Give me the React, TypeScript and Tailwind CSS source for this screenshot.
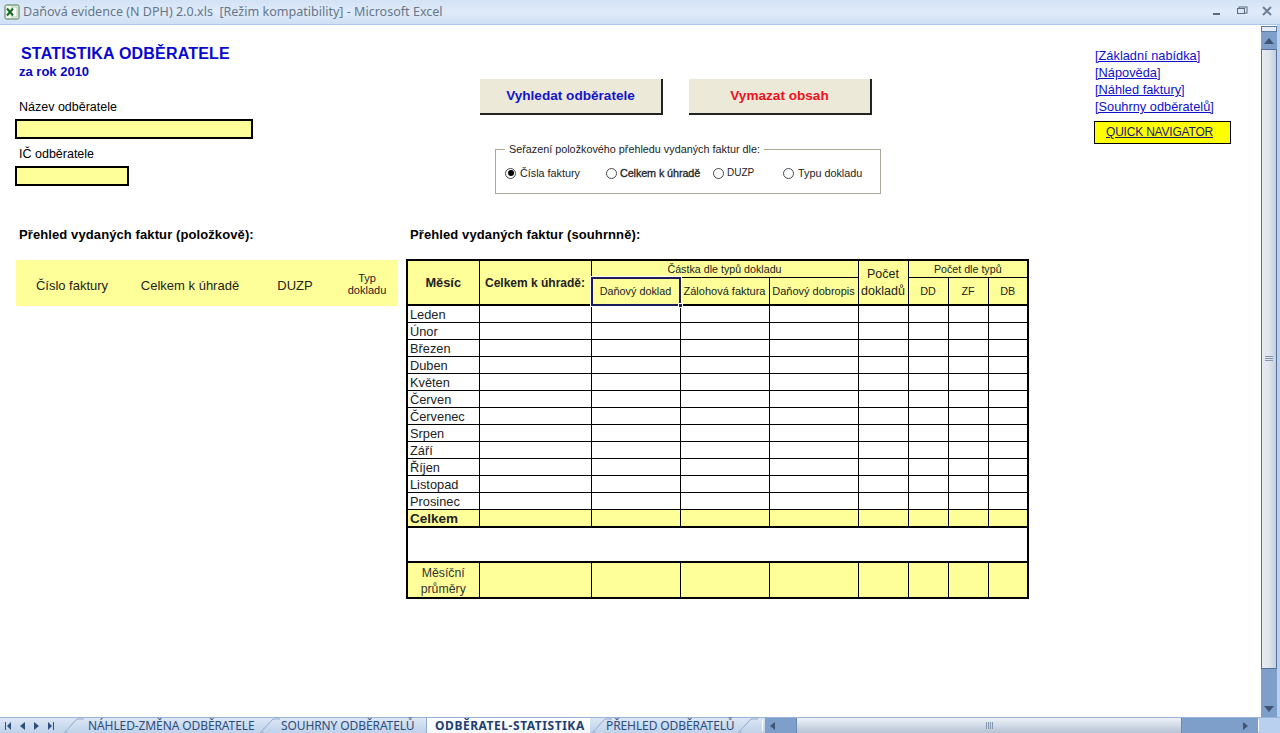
import React from "react";

const months = ["Leden","Únor","Březen","Duben","Květen","Červen","Červenec","Srpen","Září","Říjen","Listopad","Prosinec"];
const blanks = [0,1,2,3,4,5,6,7];
const cell = "border border-black p-0";
const yellowCell = "border border-black p-0 bg-[#ffff99]";

function ExcelIcon() {
  return (
    <svg width="16" height="16" viewBox="0 0 16 16" className="shrink-0">
      <rect x="1" y="1" width="14" height="14" rx="1.5" fill="#eef5ea" stroke="#4d7a4d" />
      <rect x="8" y="3" width="5" height="10" fill="#ffffff" stroke="#9bb89b" strokeWidth="0.7" />
      <path d="M3 4.5 L9 11.5 M9 4.5 L3 11.5" stroke="#1d6b2a" strokeWidth="2" />
    </svg>
  );
}

function Radio({ on }: { on?: boolean }) {
  return (
    <span className="relative inline-block w-[11px] h-[11px] rounded-full border border-[#4a4a4a] bg-white shrink-0">
      {on && <span className="absolute left-[1.5px] top-[1.5px] w-[6px] h-[6px] rounded-full bg-black" />}
    </span>
  );
}

function Slant() {
  return (
    <svg width="22" height="16" viewBox="0 0 22 16" className="shrink-0">
      <path d="M1 16 L15 1 L22 1" fill="none" stroke="#8ea9cf" />
      <path d="M2 16 L5 13 L7 16 Z" fill="#a8bcd8" />
    </svg>
  );
}

export default function App() {
  return (
    <div className="w-[1280px] h-[733px] overflow-hidden bg-white flex flex-col font-['Liberation_Sans',Arial,sans-serif] text-black">
      {/* Title bar */}
      <div className="h-[25px] shrink-0 flex items-center pl-[4px] bg-gradient-to-b from-[#d3e2f5] via-[#e0ebfa] to-[#cfe0f5] border-b border-[#a9c8ec]">
        <ExcelIcon />
        <span className="ml-[3px] flex-1 whitespace-pre text-[12.56px] text-[#64768a] font-['Noto_Sans',sans-serif]">
          Daňová evidence (N DPH) 2.0.xls  [Režim kompatibility] - Microsoft Excel
        </span>
        <svg width="72" height="14" viewBox="0 0 72 14" className="mr-[7px]">
          <rect x="12" y="8" width="7" height="2" fill="#5a6b80" />
          <rect x="38" y="2" width="8" height="6" fill="none" stroke="#5a6b80" />
          <rect x="36.5" y="3.5" width="7" height="5" fill="#dbe7f7" stroke="#5a6b80" />
          <path d="M62 2 L70 10 M70 2 L62 10" stroke="#6d7f95" strokeWidth="2" />
        </svg>
      </div>

      {/* Sheet + vertical scrollbar */}
      <div className="flex-1 min-h-0 flex">
        <div className="w-[1261px] flex items-start">
          {/* Left column */}
          <div className="w-[406px] shrink-0 pl-[15px]">
            <div className="mt-[20px] ml-[6px] text-[16px] leading-[18px] font-bold tracking-[0.2px] text-[#0808d0] whitespace-nowrap">STATISTIKA ODBĚRATELE</div>
            <div className="mt-[1px] ml-[4px] text-[13px] leading-[16px] font-bold text-[#0808c0]">za rok 2010</div>
            <div className="mt-[19px] ml-[4px] text-[12.5px] leading-[16px]">Název odběratele</div>
            <div className="mt-[4px] w-[238px] h-[20px] border-2 border-black bg-[#ffff99]" />
            <div className="mt-[7px] ml-[4px] text-[12.5px] leading-[16px]">IČ odběratele</div>
            <div className="mt-[4px] w-[114px] h-[20px] border-2 border-black bg-[#ffff99]" />
            <div className="mt-[41px] ml-[4px] text-[13px] leading-[16px] font-bold tracking-[0.1px] whitespace-nowrap">Přehled vydaných faktur (položkově):</div>
            <div className="mt-[17px] ml-px w-[382px] h-[46px] bg-[#ffff99] flex items-center text-[13px] text-[#222]">
              <span className="w-[112px] pt-[6px] text-center">Číslo faktury</span>
              <span className="w-[124px] pt-[6px] text-center">Celkem k úhradě</span>
              <span className="w-[86px] pt-[6px] text-center">DUZP</span>
              <span className="w-[58px] pt-[2px] text-center text-[11px] leading-[12px]">Typ<br />dokladu</span>
            </div>
          </div>

          {/* Middle column */}
          <div className="w-[623px] shrink-0">
            <div className="mt-[54px] ml-[74px] flex gap-[26px]">
              <div className="w-[183px] h-[36px] bg-[#ece9d8] border-r-2 border-b-2 border-[#222] flex items-center justify-center text-[13.6px] font-bold text-[#1414c8]">Vyhledat odběratele</div>
              <div className="w-[183px] h-[36px] bg-[#ece9d8] border-r-2 border-b-2 border-[#222] flex items-center justify-center text-[13.6px] font-bold text-[#ee1122]">Vymazat obsah</div>
            </div>
            <div className="relative mt-[34px] ml-[89px] w-[386px] h-[45px] border border-[#aca899] flex items-start pt-[16px] text-[10.8px] leading-[14px] text-[#222]">
              <span className="absolute -top-[8px] left-[9px] px-[4px] bg-white whitespace-nowrap">Seřazení položkového přehledu vydaných faktur dle:</span>
              <div className="w-[110px] pl-[9px] flex items-center gap-[4px]"><Radio on />Čísla faktury</div>
              <div className="w-[107px] flex items-center gap-[3px] [-webkit-text-stroke:0.3px_#222] whitespace-nowrap tracking-[-0.1px]"><Radio />Celkem k úhradě</div>
              <div className="w-[70px] flex items-center gap-[3px] text-[10px]"><Radio />DUZP</div>
              <div className="flex items-center gap-[4px]"><Radio />Typu dokladu</div>
            </div>
            <div className="mt-[33px] ml-[4px] text-[13px] leading-[16px] font-bold tracking-[0.1px] whitespace-nowrap">Přehled vydaných faktur (souhrnně):</div>
            <table className="mt-[16px] table-fixed border-collapse border-2 border-black w-[622px] text-[12.8px] leading-[14px] text-[#222]">
              <colgroup>
                <col className="w-[72px]" /><col className="w-[112px]" /><col className="w-[89px]" /><col className="w-[89px]" /><col className="w-[89px]" /><col className="w-[50px]" /><col className="w-[40px]" /><col className="w-[40px]" /><col className="w-[40px]" />
              </colgroup>
              <thead>
                <tr className="h-[17px]">
                  <th rowSpan={2} className={yellowCell + " font-bold"}>Měsíc</th>
                  <th rowSpan={2} className={yellowCell + " font-bold text-[12px]"}>Celkem k úhradě:</th>
                  <th colSpan={3} className={yellowCell + " font-normal text-[10.7px]"}>Částka dle typů dokladu</th>
                  <th rowSpan={2} className={yellowCell + " font-normal text-[12.5px] leading-[17px]"}>Počet<br />dokladů</th>
                  <th colSpan={3} className={yellowCell + " font-normal text-[10.7px]"}>Počet dle typů</th>
                </tr>
                <tr className="h-[28px] border-b-2 border-black text-[10.8px]">
                  <th className={yellowCell + " font-normal relative"}>
                    Daňový doklad
                    <span className="absolute -left-px -top-px -right-px -bottom-[2px] border-2 border-[#1c1c5c] outline outline-1 outline-white" />
                    <span className="absolute -right-[3px] -bottom-[4px] w-[5px] h-[5px] bg-[#1c1c5c] border border-white" />
                  </th>
                  <th className={yellowCell + " font-normal whitespace-nowrap text-[11px]"}>Zálohová faktura</th>
                  <th className={yellowCell + " font-normal whitespace-nowrap text-[11px]"}>Daňový dobropis</th>
                  <th className={yellowCell + " font-normal"}>DD</th>
                  <th className={yellowCell + " font-normal"}>ZF</th>
                  <th className={yellowCell + " font-normal"}>DB</th>
                </tr>
              </thead>
              <tbody>
                {months.map((m) => (
                  <tr key={m} className="h-[17px]">
                    <td className={cell + " pl-[2px] pt-[2px]"}>{m}</td>
                    {blanks.map((b) => <td key={b} className={cell} />)}
                  </tr>
                ))}
                <tr className="h-[17px] border-b-2 border-black">
                  <td className={yellowCell + " pl-[2px] pt-[2px] font-bold text-[13.5px]"}>Celkem</td>
                  {blanks.map((b) => <td key={b} className={yellowCell} />)}
                </tr>
                <tr className="h-[35px] border-b-2 border-black">
                  <td colSpan={9} className="p-0" />
                </tr>
                <tr className="h-[36px]">
                  <td className={yellowCell + " pt-px text-center text-[12.3px] leading-[16px] text-[#333]"}>Měsíční<br />průměry</td>
                  {blanks.map((b) => <td key={b} className={yellowCell} />)}
                </tr>
              </tbody>
            </table>
          </div>

          {/* Right column */}
          <div className="ml-[65px] w-[140px] shrink-0 pt-[22px]">
            <div className="ml-px text-[12.8px] leading-[17px] text-[#1010cc] underline flex flex-col items-start">
              <span>[Základní nabídka]</span>
              <span>[Nápověda]</span>
              <span>[Náhled faktury]</span>
              <span>[Souhrny odběratelů]</span>
            </div>
            <div className="mt-[6px] w-[137px] h-[23px] border border-black bg-[#ffff00] flex items-center pl-[11px] pb-[1px] text-[12px] text-[#1a1a70] underline tracking-[-0.2px]">QUICK NAVIGATOR</div>
          </div>
        </div>

        {/* Vertical scrollbar */}
        <div className="w-[16px] mt-[1px] flex flex-col items-stretch bg-[#7f9fcb]">
          <div className="h-[6px] bg-[#e3ecf7] border border-[#5d7aa3]" />
          <div className="h-[17px] flex items-center justify-center">
            <svg width="10" height="6" viewBox="0 0 10 6"><path d="M5 0 L10 6 L0 6 Z" fill="#3f5573" /></svg>
          </div>
          <div className="h-[620px] bg-gradient-to-r from-[#e6ebf2] via-[#dfe5ee] to-[#c3cedd] border border-[#56709a] flex items-center justify-center">
            <div className="w-[8px] h-[6px] bg-[repeating-linear-gradient(to_bottom,#8496ae_0,#8496ae_1px,transparent_1px,transparent_2px)]" />
          </div>
          <div className="flex-1 flex items-end justify-center pb-[5px]">
            <svg width="10" height="6" viewBox="0 0 10 6"><path d="M0 0 L10 0 L5 6 Z" fill="#3f5573" /></svg>
          </div>
        </div>
        <div className="w-[3px] bg-[#b9d0ee]" />
      </div>

      {/* Sheet tabs + horizontal scrollbar */}
      <div className="h-[16px] shrink-0 flex items-stretch bg-gradient-to-b from-[#dce7f5] to-[#bfd2ea] border-t border-[#98b3d8] text-[12px] leading-[15px] text-[#2c4c7c] font-['Noto_Sans',sans-serif] whitespace-nowrap">
        <div className="w-[62px] shrink-0 flex items-center gap-[9px] pl-[5px]">
          <svg width="6" height="8" viewBox="0 0 6 8"><path d="M0 0 H1 V8 H0 Z M6 0 V8 L2 4 Z" fill="#2f4f7f" /></svg>
          <svg width="5" height="8" viewBox="0 0 5 8"><path d="M5 0 V8 L0 4 Z" fill="#2f4f7f" /></svg>
          <svg width="5" height="8" viewBox="0 0 5 8"><path d="M0 0 V8 L5 4 Z" fill="#2f4f7f" /></svg>
          <svg width="6" height="8" viewBox="0 0 6 8"><path d="M0 0 V8 L4 4 Z M5 0 H6 V8 H5 Z" fill="#2f4f7f" /></svg>
        </div>
        <Slant />
        <span className="ml-[4px] w-[170px] shrink-0 tracking-[-0.1px]">NÁHLED-ZMĚNA ODBĚRATELE</span>
        <Slant />
        <span className="ml-[1px] w-[131px] shrink-0 tracking-[-0.1px]">SOUHRNY ODBĚRATELŮ</span>
        <div className="ml-[14px] w-[164px] shrink-0 bg-gradient-to-b from-white to-[#f2f6fb] border-l border-[#8ea9cf] pl-[8px] font-bold tracking-[0.55px] text-[#1f3f70]">ODBĚRATEL-STATISTIKA</div>
        <Slant />
        <span className="-ml-[6px] w-[134px] shrink-0 tracking-[-0.1px]">PŘEHLED ODBĚRATELŮ</span>
        <div className="w-[24px] shrink-0 -ml-[4px]"><Slant /></div>
        <div className="ml-[2px] w-[1px] my-[2px] bg-white" />
        <div className="ml-[2px] flex-1 flex items-stretch bg-[#7f9fcb]">
          <div className="w-[31px] flex items-center justify-start pl-[5px]">
            <svg width="5" height="8" viewBox="0 0 5 8"><path d="M5 0 V8 L0 4 Z" fill="#3f5573" /></svg>
          </div>
          <div className="w-[386px] bg-gradient-to-b from-[#eef2f7] to-[#b5c3d6] border-x border-[#6d86ab] flex items-center justify-center">
            <div className="w-[7px] h-[7px] bg-[repeating-linear-gradient(to_right,#8496ae_0,#8496ae_1px,transparent_1px,transparent_2px)]" />
          </div>
          <div className="flex-1 flex items-center justify-end pr-[10px]">
            <svg width="5" height="8" viewBox="0 0 5 8"><path d="M0 0 V8 L5 4 Z" fill="#3f5573" /></svg>
          </div>
        </div>
        <div className="w-[1px] my-[2px] bg-white" />
        <div className="w-[21px] shrink-0 bg-[#b9d0ee]" />
      </div>
    </div>
  );
}
